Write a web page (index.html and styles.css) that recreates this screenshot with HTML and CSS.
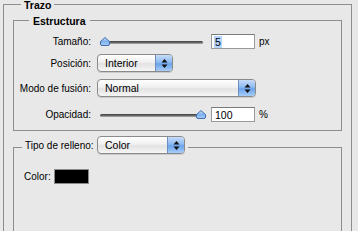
FILE: index.html
```html
<!DOCTYPE html>
<html>
<head>
  <meta charset="UTF-8">
  <title>Trazo</title>
  <link rel="stylesheet" href="styles.css">
</head>
<body>
  <fieldset class="group outer">
    <legend class="group-title">Trazo</legend>

    <fieldset class="group structure">
      <legend class="group-title">Estructura</legend>

      <div class="row row-size">
        <label class="row-label">Tamaño:</label>
        <div class="slider">
          <div class="slider-track"></div>
          <svg class="slider-thumb" style="left: 0%" width="10" height="9" viewBox="0 0 10 9">
            <defs>
              <linearGradient id="thumb-a" x1="0" y1="0" x2="0" y2="1">
                <stop offset="0" stop-color="#d6e6fb"/>
                <stop offset="0.5" stop-color="#7fb0ee"/>
                <stop offset="1" stop-color="#a9cdf7"/>
              </linearGradient>
            </defs>
            <path d="M5 0.5 L9.5 4.5 L9.5 7 Q9.5 8.5 8 8.5 L2 8.5 Q0.5 8.5 0.5 7 L0.5 4.5 Z" fill="url(#thumb-a)" stroke="#3f6fae" stroke-width="1"/>
          </svg>
        </div>
        <div class="field"><span class="selected">5</span></div>
        <span class="unit">px</span>
      </div>

      <div class="row row-position">
        <label class="row-label">Posición:</label>
        <div class="popup popup-short">
          <span class="popup-text">Interior</span>
          <span class="popup-arrows">
            <svg width="7" height="11" viewBox="0 0 7 11"><path d="M3.5 1 L6.5 4.5 L0.5 4.5 Z M0.5 6.5 L6.5 6.5 L3.5 10 Z" fill="#111"/></svg>
          </span>
        </div>
      </div>

      <div class="row row-blend">
        <label class="row-label">Modo de fusión:</label>
        <div class="popup popup-wide">
          <span class="popup-text">Normal</span>
          <span class="popup-arrows">
            <svg width="7" height="11" viewBox="0 0 7 11"><path d="M3.5 1 L6.5 4.5 L0.5 4.5 Z M0.5 6.5 L6.5 6.5 L3.5 10 Z" fill="#111"/></svg>
          </span>
        </div>
      </div>

      <div class="row row-opacity">
        <label class="row-label">Opacidad:</label>
        <div class="slider">
          <div class="slider-track"></div>
          <svg class="slider-thumb" style="left: 96px" width="10" height="9" viewBox="0 0 10 9">
            <defs>
              <linearGradient id="thumb-b" x1="0" y1="0" x2="0" y2="1">
                <stop offset="0" stop-color="#d6e6fb"/>
                <stop offset="0.5" stop-color="#7fb0ee"/>
                <stop offset="1" stop-color="#a9cdf7"/>
              </linearGradient>
            </defs>
            <path d="M5 0.5 L9.5 4.5 L9.5 7 Q9.5 8.5 8 8.5 L2 8.5 Q0.5 8.5 0.5 7 L0.5 4.5 Z" fill="url(#thumb-b)" stroke="#3f6fae" stroke-width="1"/>
          </svg>
        </div>
        <div class="field">100</div>
        <span class="unit">%</span>
      </div>
    </fieldset>

    <fieldset class="group fill">
      <legend class="fill-title">
        <span class="fill-head">
          <span class="fill-label">Tipo de relleno:</span>
          <span class="popup popup-fill">
            <span class="popup-text">Color</span>
            <span class="popup-arrows">
              <svg width="7" height="11" viewBox="0 0 7 11"><path d="M3.5 1 L6.5 4.5 L0.5 4.5 Z M0.5 6.5 L6.5 6.5 L3.5 10 Z" fill="#111"/></svg>
            </span>
          </span>
        </span>
      </legend>

      <div class="color-row">
        <span class="color-label">Color:</span>
        <div class="swatch"></div>
      </div>
    </fieldset>
  </fieldset>
</body>
</html>
```

FILE: styles.css
```css
html, body {
  margin: 0;
  padding: 0;
  height: 231px;
  overflow: hidden;
}

body {
  font-family: "Liberation Sans", Arial, sans-serif;
  font-size: 10px;
  color: #000;
  background-color: #e8e8e8;
}

.group {
  margin: 0;
  padding: 0;
  border: 1px solid #8e8e8e;
  min-width: 0;
}

.group-title {
  font-weight: bold;
  font-size: 10.5px;
  line-height: 9px;
  height: 9px;
  padding: 0 4px;
}

.outer {
  margin: 0 6px 0 3px;
  padding: 7px 9px 0 9px;
  min-height: 300px;
}

.outer > .group-title {
  margin-left: 8px;
  padding: 0 3px;
  line-height: 11px;
}

.structure {
  padding: 9px 0 8px 0;
}

.structure > .group-title {
  margin-left: 15px;
  line-height: 10px;
}

.row {
  display: flex;
  align-items: center;
}

.row-position {
  margin-top: 5px;
}

.row-blend {
  margin-top: 7px;
}

.row-opacity {
  margin-top: 10px;
}

.row-label {
  width: 77px;
  margin-right: 6px;
  text-align: right;
  white-space: nowrap;
}

/* slider */
.slider {
  position: relative;
  width: 103px;
  height: 10px;
  margin-left: 3px;
}

.slider-track {
  margin-top: 4px;
  height: 3px;
  border-radius: 2px;
  background: linear-gradient(#3c3c3c, #707070 60%, #b4b4b4);
}

.slider-thumb {
  position: absolute;
  top: 0;
  display: block;
}

.field {
  box-sizing: border-box;
  width: 44px;
  height: 15px;
  margin-left: 8px;
  padding: 1px 3px 0 3px;
  border: 1px solid #9a9a9a;
  border-top-color: #7a7a7a;
  background-color: #fff;
  line-height: 12px;
  font-size: 10.5px;
}

.selected {
  display: inline-block;
  line-height: 12px;
  padding: 0 1px;
  margin-left: -1px;
  background-color: #b5d5ff;
}

.unit {
  margin-left: 4px;
}

/* popup button */
.popup {
  box-sizing: border-box;
  display: flex;
  height: 18px;
  border: 1px solid #8a8a8a;
  border-radius: 4px;
  background: linear-gradient(#ffffff, #f0f0f0 45%, #e2e2e2 55%, #f6f6f6);
  overflow: hidden;
  box-shadow: 0 1px 0 rgba(0, 0, 0, 0.12);
}

.popup-text {
  flex-grow: 1;
  padding-left: 7px;
  line-height: 16px;
  font-weight: normal;
  font-size: 10.5px;
}

.popup-arrows {
  width: 16px;
  display: flex;
  align-items: center;
  justify-content: center;
  border-left: 1px solid #6d8fc0;
  background: linear-gradient(#c7dcf8, #8dbaf1 45%, #6aa3ec 55%, #a8cdf7);
}

.popup-short {
  width: 76px;
}

.popup-wide {
  width: 159px;
}

.popup-fill {
  width: 88px;
}

/* fill group */
.fill {
  margin-top: 5px;
  padding: 11px 0 0 0;
  min-height: 200px;
}

.fill-title {
  margin-left: 8px;
  padding: 0 3px 4px 3px;
  font-weight: normal;
  white-space: nowrap;
}

.fill-head {
  display: flex;
  align-items: center;
}

.fill-label {
  width: 72px;
  flex-shrink: 0;
}

.color-row {
  display: flex;
  align-items: center;
  padding-left: 10px;
}

.color-label {
  width: 30px;
}

.swatch {
  box-sizing: border-box;
  width: 35px;
  height: 15px;
  border: 1px solid #8a8a8a;
  background-color: #000;
}
```
